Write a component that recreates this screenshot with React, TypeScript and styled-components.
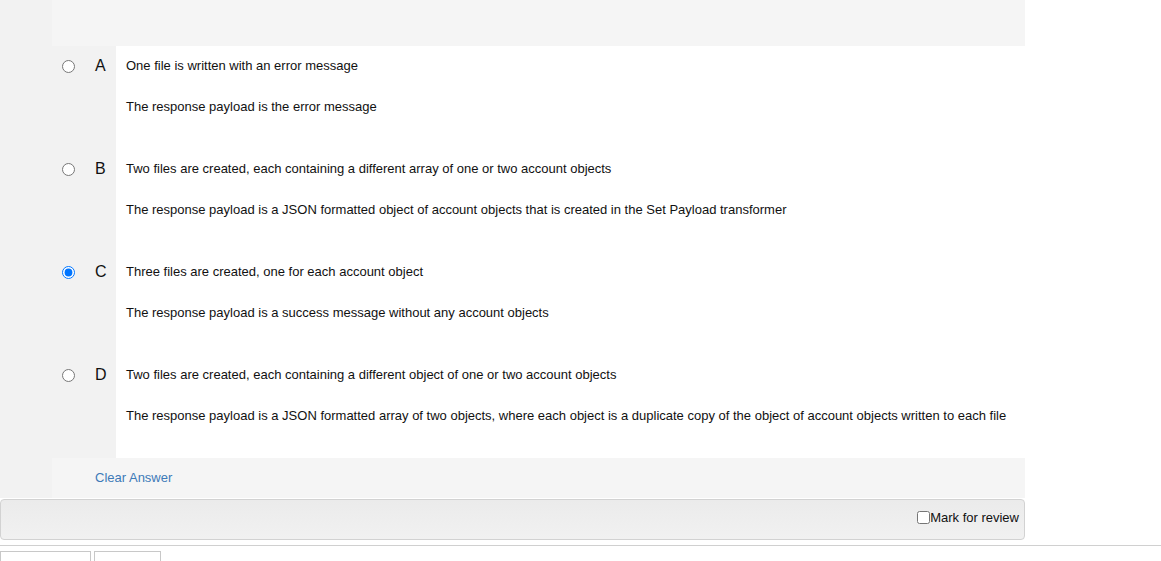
import React from "react";
import styled, { createGlobalStyle } from "styled-components";

const GlobalStyle = createGlobalStyle`
  html, body { margin: 0; padding: 0; background: #fff; }
  body {
    font-family: "Liberation Sans", Arial, sans-serif;
    font-size: 13px;
    color: #111;
  }
`;

const Page = styled.div`
  width: 1161px;
  height: 561px;
  overflow: hidden;
`;

const Question = styled.div`
  width: 1025px;
  display: flex;
`;

const LeftRail = styled.div`
  width: 52px;
  flex: none;
  background: #f2f2f2;
`;

const Main = styled.div`
  flex: 1;
  display: flex;
  flex-direction: column;
`;

const TopBand = styled.div`
  height: 46px;
  background: #f5f5f5;
`;

const OptionRow = styled.label`
  display: grid;
  grid-template-columns: 64px 1fr;
  cursor: pointer;
`;

const Gutter = styled.div`
  background: #f2f2f2;
  display: flex;
  align-items: flex-start;
  padding-top: 12px;
`;

const Radio = styled.input.attrs({ type: "radio" })`
  width: 13px;
  height: 13px;
  margin: 2px 0 0 10px;
  flex: none;
`;

const Letter = styled.span`
  font-size: 16px;
  line-height: 16px;
  margin-left: 20px;
  color: #111;
`;

const Content = styled.div`
  background: #fff;
  padding: 12px 0 34px 10px;
  display: flex;
  flex-direction: column;
  gap: 25px;
`;

const Line = styled.p`
  margin: 0;
  line-height: 16px;
`;

const ClearBand = styled.div`
  height: 40px;
  box-sizing: border-box;
  padding: 0 0 2px 43px;
  background: #f5f5f5;
  display: flex;
  align-items: center;
`;

const ClearLink = styled.a`
  color: #3d7ab8;
  text-decoration: none;
  font-size: 13px;
  cursor: pointer;
`;

const ReviewBar = styled.div`
  width: 1025px;
  box-sizing: border-box;
  height: 41px;
  margin-top: 1px;
  border: 1px solid #d2d2d2;
  border-radius: 4px;
  background: linear-gradient(#ebebeb, #f1f1f1);
  display: flex;
  justify-content: flex-end;
  align-items: flex-start;
  padding: 10px 5px 0 0;
`;

const ReviewLabel = styled.label`
  display: flex;
  align-items: center;
  font-size: 13px;
  color: #111;
  cursor: pointer;
`;

const Check = styled.input.attrs({ type: "checkbox" })`
  width: 13px;
  height: 13px;
  margin: 0;
`;

const Divider = styled.div`
  margin-top: 5px;
  border-top: 1px solid #d0d0d0;
`;

const ButtonRow = styled.div`
  display: flex;
  gap: 3px;
  margin-top: 5px;
`;

const NavButton = styled.button<{ $w: number }>`
  width: ${(p) => p.$w}px;
  height: 30px;
  background: #fff;
  border: 1px solid #c8c8c8;
  border-radius: 0;
  padding: 0;
`;

const options = [
  {
    key: "A",
    lines: [
      "One file is written with an error message",
      "The response payload is the error message",
    ],
  },
  {
    key: "B",
    lines: [
      "Two files are created, each containing a different array of one or two account objects",
      "The response payload is a JSON formatted object of account objects that is created in the Set Payload transformer",
    ],
  },
  {
    key: "C",
    lines: [
      "Three files are created, one for each account object",
      "The response payload is a success message without any account objects",
    ],
  },
  {
    key: "D",
    lines: [
      "Two files are created, each containing a different object of one or two account objects",
      "The response payload is a JSON formatted array of two objects, where each object is a duplicate copy of the object of account objects written to each file",
    ],
  },
];

export default function App() {
  const [selected, setSelected] = React.useState("C");
  const [review, setReview] = React.useState(false);
  return (
    <Page>
      <GlobalStyle />
      <Question>
        <LeftRail />
        <Main>
          <TopBand />
          {options.map((o) => (
            <OptionRow key={o.key}>
              <Gutter>
                <Radio
                  name="answer"
                  checked={selected === o.key}
                  onChange={() => setSelected(o.key)}
                />
                <Letter>{o.key}</Letter>
              </Gutter>
              <Content>
                {o.lines.map((l) => (
                  <Line key={l}>{l}</Line>
                ))}
              </Content>
            </OptionRow>
          ))}
          <ClearBand>
            <ClearLink onClick={() => setSelected("")}>Clear Answer</ClearLink>
          </ClearBand>
        </Main>
      </Question>
      <ReviewBar>
        <ReviewLabel>
          <Check checked={review} onChange={() => setReview(!review)} />
          Mark for review
        </ReviewLabel>
      </ReviewBar>
      <Divider />
      <ButtonRow>
        <NavButton $w={91} />
        <NavButton $w={67} />
      </ButtonRow>
    </Page>
  );
}
